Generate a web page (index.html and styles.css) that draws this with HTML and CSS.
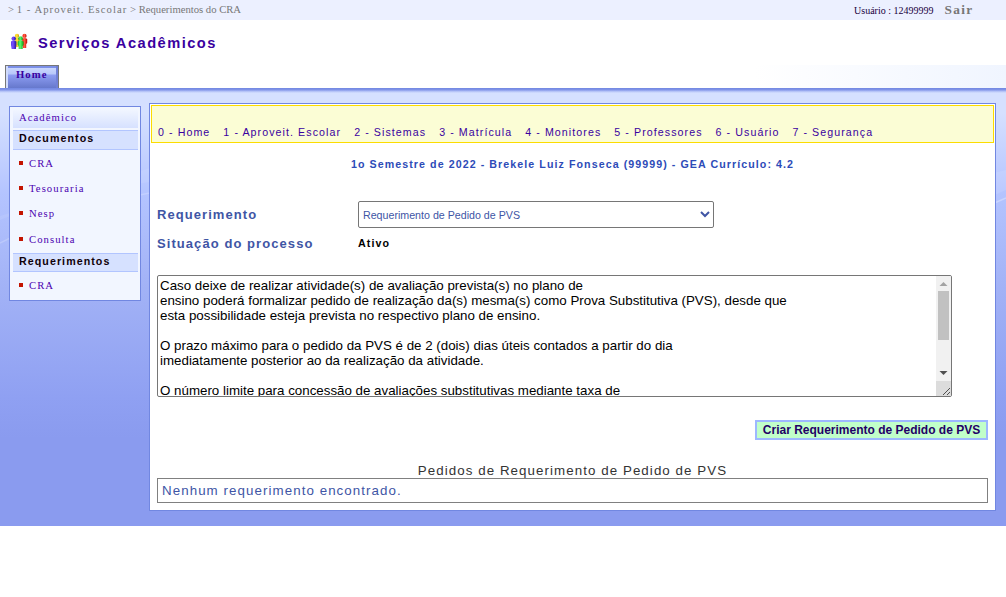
FILE: index.html
```html
<!DOCTYPE html>
<html lang="pt-BR">
<head>
<meta charset="utf-8">
<title>Serviços Acadêmicos</title>
<link rel="stylesheet" href="styles.css">
</head>
<body>
<header class="crumbs">
  <div class="path">&gt; <span class="wide">1 - Aproveit. Escolar</span> &gt; Requerimentos do CRA</div>
  <div class="user">Usuário : 12499999</div>
  <a class="exit">Sair</a>
</header>
<div class="brand">
  <svg class="logo" width="18" height="17" viewBox="0 0 18 17">
    <defs>
      <linearGradient id="b"><stop offset="0" stop-color="#5a3cf0"/><stop offset=".35" stop-color="#7a50ff"/><stop offset="1" stop-color="#20109a"/></linearGradient>
      <linearGradient id="g"><stop offset="0" stop-color="#12a820"/><stop offset=".4" stop-color="#60ff70"/><stop offset="1" stop-color="#0b9a16"/></linearGradient>
      <linearGradient id="y"><stop offset="0" stop-color="#f4c400"/><stop offset=".5" stop-color="#ffe640"/><stop offset="1" stop-color="#c88a00"/></linearGradient>
      <linearGradient id="r"><stop offset="0" stop-color="#f02010"/><stop offset=".5" stop-color="#ff5a40"/><stop offset="1" stop-color="#b80000"/></linearGradient>
    </defs>
    <g fill="url(#y)"><circle cx="7" cy="2.900" r="2.100"/><path d="M5 5.500Q7 4 9.500 5.500V9L8.500 14H6Z"/></g>
    <g fill="url(#r)"><circle cx="14.500" cy="2.900" r="2.100"/><path d="M12 6Q14.500 4 17.200 6V10L16.200 11V15H13Z"/></g>
    <g fill="url(#b)"><circle cx="3.700" cy="5.600" r="2.200"/><path d="M1 8.500Q3.500 6.500 6.400 8.500V12L5.900 16H1.700L1 12Z"/></g>
    <g fill="url(#g)"><circle cx="10.600" cy="5.600" r="2.300"/><path d="M7.700 8.500Q10.500 6.500 13.600 8.500V12L12.700 13V16H8.700V13L7.700 12Z"/></g>
  </svg>
  <h1>Serviços Acadêmicos</h1>
</div>
<nav class="tabs"><a class="tab">Home</a></nav>
<main class="stage">
  <svg class="swoosh" viewBox="0 0 1006 437" width="1006" height="437">
    <path d="M0 132Q75 103 150 80V94Q70 105 0 128Z" fill="#fff" opacity=".08"/>
    <path d="M0 155Q70 119 150 105" fill="none" stroke="#fff" stroke-width="1.500" opacity=".2"/>
    <path d="M990 86L1006 82V102L990 109Z" fill="#fff" opacity=".1"/>
    <path d="M990 117L1006 110" stroke="#fff" stroke-width="1.500" opacity=".3"/>
  </svg>
  <aside class="side">
    <div class="side-top">Acadêmico</div>
    <div class="side-head">Documentos</div>
    <ul class="links"><li>CRA</li><li>Tesouraria</li><li>Nesp</li><li>Consulta</li></ul>
    <div class="side-head second">Requerimentos</div>
    <ul class="links"><li>CRA</li></ul>
  </aside>
  <section class="panel">
    <nav class="menu"><a>0 - Home</a><a>1 - Aproveit. Escolar</a><a>2 - Sistemas</a><a>3 - Matrícula</a><a>4 - Monitores</a><a>5 - Professores</a><a>6 - Usuário</a><a>7 - Segurança</a></nav>
    <h2>1o Semestre de 2022 - Brekele Luiz Fonseca (99999) - GEA Currículo: 4.2</h2>
    <div class="form">
      <span class="label">Requerimento</span>
      <select class="pick"><option>Requerimento de Pedido de PVS</option></select>
      <span class="label">Situação do processo</span>
      <span class="status">Ativo</span>
    </div>
    <div class="memo">
      <div class="memo-text">Caso deixe de realizar atividade(s) de avaliação prevista(s) no plano de
ensino poderá formalizar pedido de realização da(s) mesma(s) como Prova Substitutiva (PVS), desde que
esta possibilidade esteja prevista no respectivo plano de ensino.

O prazo máximo para o pedido da PVS é de 2 (dois) dias úteis contados a partir do dia
imediatamente posterior ao da realização da atividade.

O número limite para concessão de avaliações substitutivas mediante taxa de</div>
      <div class="bar">
        <svg width="15" height="15"><path d="M3.500 10L7.500 6L11.500 10Z" fill="#a3a3a3"/></svg>
        <div class="thumb"></div>
        <svg width="15" height="15"><path d="M3.500 5L7.500 9L11.500 5Z" fill="#505050"/></svg>
        <svg class="grip" width="15" height="15"><path d="M7 14L14 7M11 14L14 11" stroke="#505050" stroke-width="1"/></svg>
      </div>
    </div>
    <button class="create">Criar Requerimento de Pedido de PVS</button>
    <div class="caption">Pedidos de Requerimento de Pedido de PVS</div>
    <div class="empty">Nenhum requerimento encontrado.</div>
  </section>
</main>
</body>
</html>
```
FILE: styles.css
```css
* { box-sizing: border-box; }
body { margin: 0; background: #fff; font-family: "Liberation Sans", Arial, sans-serif; }
.crumbs { display: flex; height: 20px; padding: 0 32.500px 0 8px; background: #ecf0ff; font: 10.670px/19px "Liberation Serif", serif; color: #777; }
.path { flex: 1; white-space: nowrap; }
.wide { letter-spacing: 1.040px; }
.user { font-size: 10px; line-height: 22px; color: #1a0040; }
.exit { margin-left: 11px; font-weight: bold; font-size: 13.330px; line-height: 20px; letter-spacing: 1.333px; color: #777; }
.brand { display: flex; height: 45px; padding: 13px 0 0 10px; }
.logo { display: block; }
h1 { margin: 0 0 0 10px; font-size: 14.670px; line-height: 20px; letter-spacing: 1.467px; color: #3a00a0; }
.tabs { height: 23px; padding-left: 5px; background: linear-gradient(90deg, #fff 75%, #f0f5ff); }
.tab { display: block; width: 54px; height: 23px; border: 1px solid #777; border-bottom: 0; box-shadow: inset 2px 0 #cfdafc, inset -2px 0 #7080d8, inset 0 2px #7c90e8; background: linear-gradient(#d0dcff 0, #b8c8fa 8px, #8d9df2 9px, #6678cc); padding-left: 10px; font: bold 10.670px/17px "Liberation Serif", serif; letter-spacing: 1.067px; color: #3a00a0; }
.stage { position: relative; display: flex; align-items: flex-start; height: 438px; padding: 15px 10px 0 9px; background: linear-gradient(#7187e1 0, #8295e9 2px, #abbaf4 3px, #d5e0ff 5px, #d5e0ff 25px, #b4c4ff 105px, #a2b2f6 200px, #8fa0f2 310px, #8a9bef 350px, #8a9bef); }
.swoosh { position: absolute; left: 0; top: 0; }
.side { position: relative; width: 132px; height: 195px; margin: 3px 8px 0 0; padding: 2px 2px 0 3px; border: 1px solid #7187e1; background: #f2f6ff; color: #4b00b0; font: 10.670px/17px "Liberation Serif", serif; letter-spacing: 1.067px; }
.side-top { height: 19px; padding-left: 6px; background: linear-gradient(#f2f6ff, #d6e1ff); }
.side-head { height: 20px; margin-top: 2px; padding-left: 6px; border: solid #b2c5ff; border-width: 1px 0; background: #d6e1ff; font: bold 10.670px/15px "Liberation Sans", sans-serif; letter-spacing: 1.067px; color: #100008; }
.links { margin: 0; padding: 1px 0 0 6px; list-style: none; }
.side-head.second { height: 19px; margin-top: 1px; }
.links li { display: flex; align-items: center; height: 25px; gap: 6px; }
.links li:nth-child(4) { height: 26px; padding-top: 1px; }
.links li::before { content: ""; width: 4px; height: 4px; margin-top: -1px; background: #c31400; }
.panel { position: relative; display: flex; flex-direction: column; width: 847px; height: 408px; padding: 1px; border: 1px solid #7187e1; background: #fff; }
.menu { display: flex; gap: 13px; height: 38px; padding: 19px 0 0 6px; border: 1px solid #fcdc00; background: #fbfdd5; font-size: 10.670px; line-height: 14px; letter-spacing: 1.067px; color: #3a00a0; white-space: nowrap; }
h2 { margin: 14px 0 0; font-size: 10.670px; line-height: 14px; letter-spacing: 1.067px; text-align: center; color: #2d4bb8; }
.form { display: grid; grid-template-columns: 201px 356px; grid-template-rows: 27px 30px; align-items: center; margin: 30px 0 0 6px; }
.label { font-weight: bold; font-size: 13px; letter-spacing: 1.067px; color: #4055a5; white-space: nowrap; }
.pick { width: 356px; height: 27px; border: 1px solid #767676; border-radius: 2px; background: #fff; font: 10.670px "Liberation Sans", sans-serif; color: #4055a5; padding: 0; }
.status { font-weight: bold; font-size: 10.670px; letter-spacing: 1.067px; color: #000; }
.memo { display: flex; width: 795px; height: 122px; flex: none; margin: 17px 0 0 6px; border: 1px solid #767676; border-radius: 2px; overflow: hidden; }
.memo-text { flex: 1; padding: 2px; white-space: pre; font-size: 13.330px; line-height: 15px; color: #000; }
.bar { display: flex; flex-direction: column; width: 15px; background: #f1f1f1; }
.bar svg { display: block; flex: none; }
.thumb { width: 11px; height: 49px; flex: none; margin: 0 2px 26px; background: #c1c1c1; }
.bar .grip { background: #dcdcdc; }
.create { align-self: flex-end; width: 233px; height: 20px; flex: none; margin: 23px 6px 0 0; padding: 0; border: 2px solid #9db8ff; background: #c1ffc9; font: bold 12px/16px "Liberation Sans", sans-serif; color: #220066; white-space: nowrap; }
.caption { margin-top: 22px; height: 16px; flex: none; font-size: 13.330px; line-height: 17px; letter-spacing: 1.067px; text-align: center; color: #333; }
.empty { height: 25px; flex: none; margin: 0 6px; padding-left: 4px; border: 1px solid #808080; font-size: 13.330px; line-height: 23px; letter-spacing: 1.067px; color: #4055a5; }
```
